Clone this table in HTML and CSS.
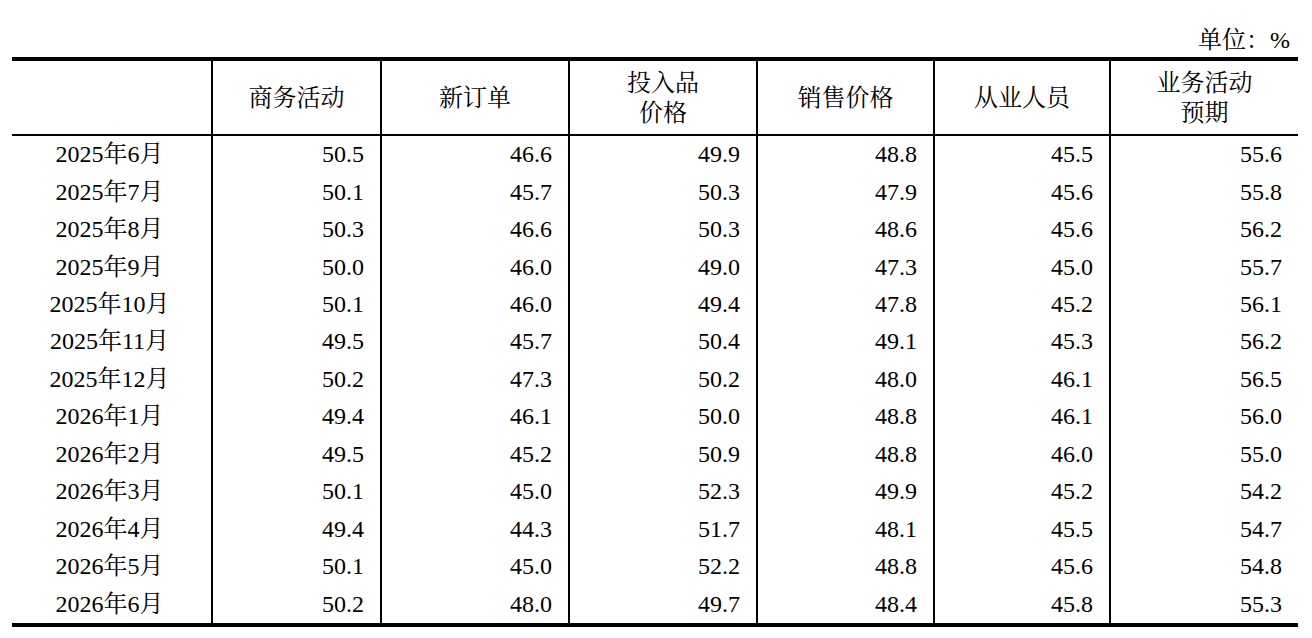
FILE: index.html
```html
<!DOCTYPE html>
<html>
<head>
<meta charset="utf-8">
<link rel="stylesheet" href="styles.css">
</head>
<body>
<div class="page">
  <div class="unit">单位：%</div>
  <table class="pmi">
    <colgroup>
      <col class="c0"><col class="c1"><col class="c2"><col class="c3"><col class="c4"><col class="c5"><col class="c6">
    </colgroup>
    <thead>
      <tr>
        <th class="h"></th>
        <th class="h">商务活动</th>
        <th class="h">新订单</th>
        <th class="h">投入品<br>价格</th>
        <th class="h">销售价格</th>
        <th class="h">从业人员</th>
        <th class="h">业务活动<br>预期</th>
      </tr>
    </thead>
    <tbody>
      <tr><td class="m">2025年6月</td><td class="v">50.5</td><td class="v">46.6</td><td class="v">49.9</td><td class="v">48.8</td><td class="v">45.5</td><td class="v">55.6</td></tr>
      <tr><td class="m">2025年7月</td><td class="v">50.1</td><td class="v">45.7</td><td class="v">50.3</td><td class="v">47.9</td><td class="v">45.6</td><td class="v">55.8</td></tr>
      <tr><td class="m">2025年8月</td><td class="v">50.3</td><td class="v">46.6</td><td class="v">50.3</td><td class="v">48.6</td><td class="v">45.6</td><td class="v">56.2</td></tr>
      <tr><td class="m">2025年9月</td><td class="v">50.0</td><td class="v">46.0</td><td class="v">49.0</td><td class="v">47.3</td><td class="v">45.0</td><td class="v">55.7</td></tr>
      <tr><td class="m">2025年10月</td><td class="v">50.1</td><td class="v">46.0</td><td class="v">49.4</td><td class="v">47.8</td><td class="v">45.2</td><td class="v">56.1</td></tr>
      <tr><td class="m">2025年11月</td><td class="v">49.5</td><td class="v">45.7</td><td class="v">50.4</td><td class="v">49.1</td><td class="v">45.3</td><td class="v">56.2</td></tr>
      <tr><td class="m">2025年12月</td><td class="v">50.2</td><td class="v">47.3</td><td class="v">50.2</td><td class="v">48.0</td><td class="v">46.1</td><td class="v">56.5</td></tr>
      <tr><td class="m">2026年1月</td><td class="v">49.4</td><td class="v">46.1</td><td class="v">50.0</td><td class="v">48.8</td><td class="v">46.1</td><td class="v">56.0</td></tr>
      <tr><td class="m">2026年2月</td><td class="v">49.5</td><td class="v">45.2</td><td class="v">50.9</td><td class="v">48.8</td><td class="v">46.0</td><td class="v">55.0</td></tr>
      <tr><td class="m">2026年3月</td><td class="v">50.1</td><td class="v">45.0</td><td class="v">52.3</td><td class="v">49.9</td><td class="v">45.2</td><td class="v">54.2</td></tr>
      <tr><td class="m">2026年4月</td><td class="v">49.4</td><td class="v">44.3</td><td class="v">51.7</td><td class="v">48.1</td><td class="v">45.5</td><td class="v">54.7</td></tr>
      <tr><td class="m">2026年5月</td><td class="v">50.1</td><td class="v">45.0</td><td class="v">52.2</td><td class="v">48.8</td><td class="v">45.6</td><td class="v">54.8</td></tr>
      <tr><td class="m">2026年6月</td><td class="v">50.2</td><td class="v">48.0</td><td class="v">49.7</td><td class="v">48.4</td><td class="v">45.8</td><td class="v">55.3</td></tr>
    </tbody>
  </table>
</div>
</body>
</html>
```
FILE: styles.css
```css
html, body {
  margin: 0;
  padding: 0;
  background: #ffffff;
}
.page,
.unit,
.pmi,
.pmi .h,
.pmi .m,
.pmi .v {
  font-family: "Liberation Serif", "Noto Serif CJK SC", "Noto Sans CJK SC", serif;
  font-size: 24px;
  color: #000000;
}
.page {
  padding: 26px 14px 0 12px;
  width: 1286px;
}
.unit {
  text-align: right;
  line-height: 28px;
  height: 28px;
  padding-right: 8px;
  margin-bottom: 3px;
}
.pmi {
  border-collapse: collapse;
  table-layout: fixed;
  width: 1286px;
  border-top: 4px solid #000;
  border-bottom: 4px solid #000;
}
.c0 { width: 200px; }
.c1 { width: 169px; }
.c2 { width: 188px; }
.c3 { width: 188px; }
.c4 { width: 177px; }
.c5 { width: 176px; }
.c6 { width: 188px; }
.pmi .h {
  font-weight: normal;
  height: 73px;
  padding: 0;
  line-height: 30px;
  text-align: center;
  vertical-align: middle;
  border-bottom: 2px solid #000;
  border-left: 2px solid #000;
}
.pmi .m,
.pmi .v {
  height: 37.46px;
  padding: 0 16px 0 0;
  line-height: 37px;
  text-align: right;
  vertical-align: middle;
  border-left: 2px solid #000;
  white-space: nowrap;
}
.pmi .h:first-child,
.pmi .m {
  border-left: none;
}
.pmi .m {
  text-align: center;
  padding: 0 4px 0 0;
}
```
